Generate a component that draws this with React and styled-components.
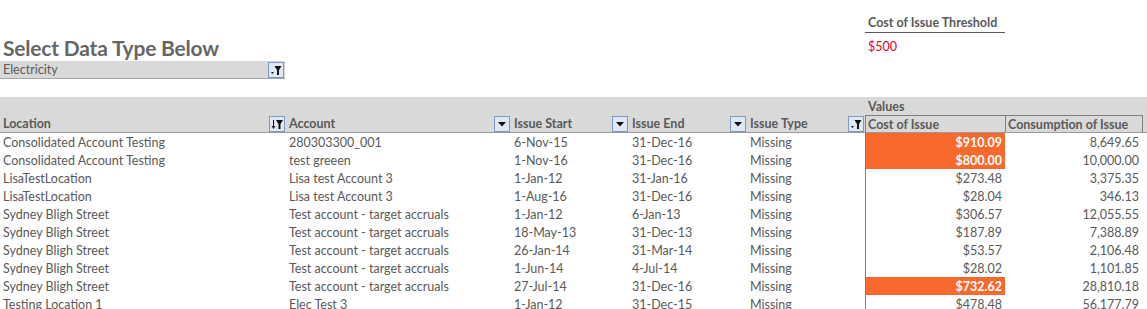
import React from "react";
import styled, { createGlobalStyle } from "styled-components";

const Global = createGlobalStyle`
  html, body { margin: 0; padding: 0; background: #fff; overflow: hidden; }
  body { font-family: Lato, "Open Sans", sans-serif; color: #595959; }
`;

const COLS = "286px 225px 118px 118px 118px 140px 138px";
const TEXT = "#595959";
const GRAY = "#d9d9d9";
const ORANGE = "#f7692d";
const FS = "12.5px";

const Page = styled.div`
  width: 1147px;
  height: 309px;
  overflow: hidden;
`;

const Top = styled.div`
  display: grid;
  grid-template-columns: 865px 1fr;
  height: 97px;
`;

const LeftTop = styled.div`
  padding-top: 34px;
  display: flex;
  flex-direction: column;
`;

const Title = styled.div`
  font-weight: 700;
  font-size: 21px;
  line-height: 27px;
  color: #666;
  padding-left: 3px;
  letter-spacing: -0.2px;
`;

const Dropdown = styled.div`
  height: 17px;
  background: ${GRAY};
  border-bottom: 1px solid #a6a6a6;
  display: flex;
  align-items: center;
  justify-content: space-between;
  padding: 0 1px 0 3px;
  width: 281px;
  font-size: ${FS};
  color: ${TEXT};
`;

const Threshold = styled.div`
  padding-top: 15px;
  display: flex;
  flex-direction: column;
  width: 140px;
`;

const ThresholdLabel = styled.div`
  font-weight: 700;
  font-size: ${FS};
  line-height: 16px;
  color: ${TEXT};
  padding-left: 3px;
  border-bottom: 1.5px solid #595959;
  padding-bottom: 1px;
  white-space: nowrap;
`;

const ThresholdValue = styled.div`
  font-size: ${FS};
  line-height: 16px;
  color: #e0002a;
  padding-left: 3px;
  margin-top: 6px;
`;

const HeaderBand = styled.div`
  background: ${GRAY};
  width: 1147px;
  border-bottom: 1px solid #9a9a9a;
`;

const ValuesRow = styled.div`
  display: grid;
  grid-template-columns: 865px 1fr;
  height: 18px;
  align-items: center;
`;

const HeaderRow = styled.div`
  display: grid;
  grid-template-columns: ${COLS};
  height: 17px;
`;

const HeadCell = styled.div`
  display: flex;
  align-items: center;
  justify-content: space-between;
  font-weight: 700;
  font-size: ${FS};
  color: ${TEXT};
  padding-left: ${(p) => p.$pl ?? 3}px;
  padding-right: 1px;
  box-sizing: border-box;
  white-space: nowrap;
  ${(p) => p.$boxed && `border-top: 1px solid #7f7f7f; border-left: 1px solid #7f7f7f;`}
  ${(p) => p.$boxRight && `border-right: 1px solid #7f7f7f;`}
`;

const Label = styled.span``;

const Row = styled.div`
  display: grid;
  grid-template-columns: ${COLS};
  height: 18px;
`;

const Cell = styled.div`
  display: flex;
  align-items: center;
  font-size: ${FS};
  color: ${TEXT};
  padding-left: 3px;
  white-space: nowrap;
  overflow: hidden;
  box-sizing: border-box;
`;

const NumCell = styled(Cell)`
  justify-content: flex-end;
  padding-right: ${(p) => p.$pr ?? 3}px;
  ${(p) => p.$left && `border-left: 1px solid #7f7f7f;`}
  background: ${(p) => (p.$hot ? ORANGE : "transparent")};
  color: ${(p) => (p.$hot ? "#fff" : TEXT)};
  font-weight: ${(p) => (p.$hot ? 700 : 400)};
`;

const Btn = styled.span`
  width: 14px;
  height: 14px;
  border: 1px solid #7b9ac3;
  background: #dfe8f3;
  display: inline-flex;
  align-items: center;
  justify-content: center;
  flex: none;
`;

const Arrow = () => (
  <Btn>
    <svg width="14" height="14" viewBox="0 0 14 14">
      <polygon points="3,5 11,5 7,9.5" fill="#111" />
    </svg>
  </Btn>
);

const Filter = () => (
  <Btn>
    <svg width="14" height="14" viewBox="0 0 14 14">
      <polygon points="2,9 5,9 3.5,11" fill="#111" />
      <polygon points="5.5,3 12.5,3 10,7 10,12 8,12 8,7" fill="#111" />
    </svg>
  </Btn>
);

const SortFilter = () => (
  <Btn>
    <svg width="14" height="14" viewBox="0 0 14 14">
      <rect x="3" y="3" width="1" height="7" fill="#111" />
      <polygon points="1.5,9 5.5,9 3.5,12" fill="#111" />
      <polygon points="6,3 13,3 10.5,7 10.5,12 8.5,12 8.5,7" fill="#111" />
    </svg>
  </Btn>
);

const rows = [
  ["Consolidated Account Testing", "280303300_001", "6-Nov-15", "31-Dec-16", "Missing", "$910.09", "8,649.65", true],
  ["Consolidated Account Testing", "test greeen", "1-Nov-16", "31-Dec-16", "Missing", "$800.00", "10,000.00", true],
  ["LisaTestLocation", "Lisa test Account 3", "1-Jan-12", "31-Jan-16", "Missing", "$273.48", "3,375.35"],
  ["LisaTestLocation", "Lisa test Account 3", "1-Aug-16", "31-Dec-16", "Missing", "$28.04", "346.13"],
  ["Sydney Bligh Street", "Test account - target accruals", "1-Jan-12", "6-Jan-13", "Missing", "$306.57", "12,055.55"],
  ["Sydney Bligh Street", "Test account - target accruals", "18-May-13", "31-Dec-13", "Missing", "$187.89", "7,388.89"],
  ["Sydney Bligh Street", "Test account - target accruals", "26-Jan-14", "31-Mar-14", "Missing", "$53.57", "2,106.48"],
  ["Sydney Bligh Street", "Test account - target accruals", "1-Jun-14", "4-Jul-14", "Missing", "$28.02", "1,101.85"],
  ["Sydney Bligh Street", "Test account - target accruals", "27-Jul-14", "31-Dec-16", "Missing", "$732.62", "28,810.18", true],
  ["Testing Location 1", "Elec Test 3", "1-Jan-12", "31-Dec-15", "Missing", "$478.48", "56,177.79"],
];

export default function App() {
  return (
    <Page>
      <Global />
      <Top>
        <LeftTop>
          <Title>Select Data Type Below</Title>
          <Dropdown>
            <Label>Electricity</Label>
            <Filter />
          </Dropdown>
        </LeftTop>
        <Threshold>
          <ThresholdLabel>Cost of Issue Threshold</ThresholdLabel>
          <ThresholdValue>$500</ThresholdValue>
        </Threshold>
      </Top>
      <HeaderBand>
        <ValuesRow>
          <span />
          <HeadCell>Values</HeadCell>
        </ValuesRow>
        <HeaderRow>
          <HeadCell>
            <Label>Location</Label>
            <SortFilter />
          </HeadCell>
          <HeadCell>
            <Label>Account</Label>
            <Arrow />
          </HeadCell>
          <HeadCell>
            <Label>Issue Start</Label>
            <Arrow />
          </HeadCell>
          <HeadCell>
            <Label>Issue End</Label>
            <Arrow />
          </HeadCell>
          <HeadCell>
            <Label>Issue Type</Label>
            <Filter />
          </HeadCell>
          <HeadCell $boxed $pl={2}>
            <Label>Cost of Issue</Label>
          </HeadCell>
          <HeadCell $boxed $boxRight $pl={2}>
            <Label>Consumption of Issue</Label>
          </HeadCell>
        </HeaderRow>
      </HeaderBand>
      {rows.map((r, i) => (
        <Row key={i}>
          <Cell>{r[0]}</Cell>
          <Cell>{r[1]}</Cell>
          <Cell>{r[2]}</Cell>
          <Cell>{r[3]}</Cell>
          <Cell>{r[4]}</Cell>
          <NumCell $left $hot={r[7]}>{r[5]}</NumCell>
          <NumCell $pr={4}>{r[6]}</NumCell>
        </Row>
      ))}
    </Page>
  );
}
